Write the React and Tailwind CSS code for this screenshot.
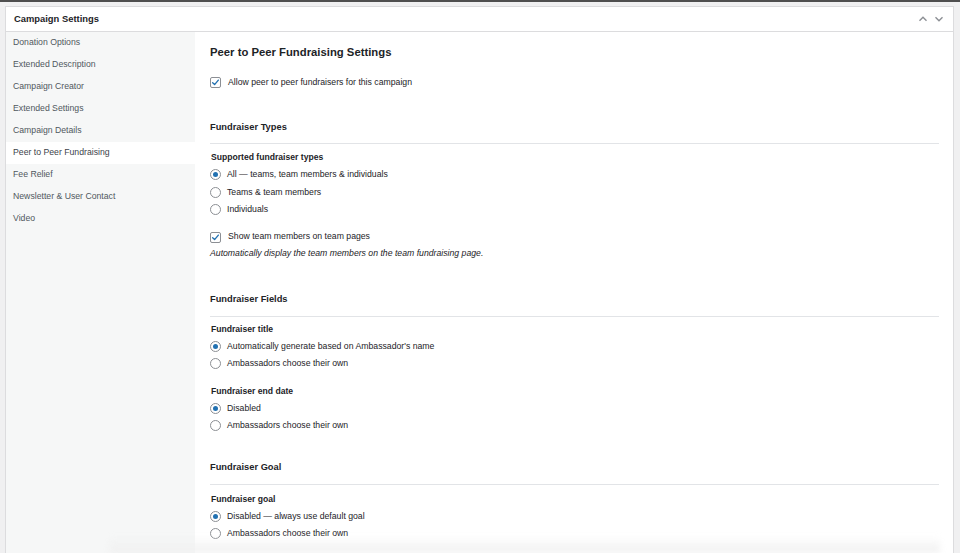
const tabs = [
  "Donation Options",
  "Extended Description",
  "Campaign Creator",
  "Extended Settings",
  "Campaign Details",
  "Peer to Peer Fundraising",
  "Fee Relief",
  "Newsletter & User Contact",
  "Video",
];

function Radio({ checked, children }) {
  return (
    <div className="flex items-center h-[17.5px]">
      <span className="w-[11px] h-[11px] rounded-full border border-[#8c8f94] bg-white flex items-center justify-center shrink-0">
        {checked && <span className="w-[5px] h-[5px] rounded-full bg-[#2271b1]" />}
      </span>
      <span className="ml-[6px] text-[8.7px] text-[#1d2327]">{children}</span>
    </div>
  );
}

function Checkbox({ children }) {
  return (
    <div className="flex items-center h-[17px]">
      <span className="w-[11px] h-[11px] rounded-[2px] border border-[#8c8f94] bg-white flex items-center justify-center shrink-0">
        <svg viewBox="0 0 12 12" className="w-[9px] h-[9px]">
          <path d="M2.2 6.4 L4.8 8.8 L9.8 2.8" fill="none" stroke="#2271b1" strokeWidth="1.8" strokeLinecap="round" strokeLinejoin="round" />
        </svg>
      </span>
      <span className="ml-[7px] text-[8.7px] text-[#1d2327]">{children}</span>
    </div>
  );
}

function SectionHeading({ children, className = "" }) {
  return (
    <div className={className}>
      <div className="h-[17px] flex items-center text-[9.3px] font-bold text-[#1d2327]">{children}</div>
      <div className="mt-[7px] border-t border-[#e2e4e7]" />
    </div>
  );
}

function Label({ children, className = "" }) {
  return (
    <div className={`h-[17px] flex items-center text-[8.6px] font-bold text-[#1d2327] pl-[1px] ${className}`}>
      {children}
    </div>
  );
}

export default function App() {
  return (
    <div className="relative w-[960px] h-[553px] overflow-hidden bg-[#f0f0f1] border-t-2 border-[#4f4f4f] font-['Liberation_Sans',Arial,sans-serif]">
      <div className="ml-[5px] mt-[4px] w-[949px] h-[600px] bg-white border border-[#dcdcde]">
        <div className="h-[25px] flex items-center justify-between px-[8px] border-b border-[#dcdcde]">
          <span className="text-[9.4px] font-bold text-[#1d2327]">Campaign Settings</span>
          <div className="flex items-center gap-[6px] text-[#8c8f94] pr-[1px]">
            <svg viewBox="0 0 10 10" className="w-[10px] h-[10px]">
              <path d="M1.5 6.8 L5 3.3 L8.5 6.8" fill="none" stroke="currentColor" strokeWidth="1.4" />
            </svg>
            <svg viewBox="0 0 10 10" className="w-[10px] h-[10px]">
              <path d="M1.5 3.3 L5 6.8 L8.5 3.3" fill="none" stroke="currentColor" strokeWidth="1.4" />
            </svg>
          </div>
        </div>
        <div className="flex h-full">
          <ul className="w-[189px] shrink-0 bg-[#f6f7f7]">
            {tabs.map((t) => (
              <li
                key={t}
                className={`h-[22px] flex items-center pl-[7px] text-[8.7px] ${
                  t === "Peer to Peer Fundraising" ? "bg-white text-[#3c434a]" : "text-[#50575e]"
                }`}
              >
                {t}
              </li>
            ))}
          </ul>
          <div className="flex-1 pl-[15px] pr-[14px] text-[#1d2327]">
            <div className="mt-[12px] h-[16px] flex items-center text-[11.3px] font-bold text-[#1d2327]">
              Peer to Peer Fundraising Settings
            </div>
            <div className="mt-[14px]">
              <Checkbox>Allow peer to peer fundraisers for this campaign</Checkbox>
            </div>

            <SectionHeading className="mt-[28px]">Fundraiser Types</SectionHeading>
            <Label className="mt-[5px]">Supported fundraiser types</Label>
            <Radio checked>All — teams, team members &amp; individuals</Radio>
            <Radio>Teams &amp; team members</Radio>
            <Radio>Individuals</Radio>
            <div className="mt-[10px]">
              <Checkbox>Show team members on team pages</Checkbox>
            </div>
            <div className="h-[17px] flex items-center text-[8.7px] italic text-[#1d2327]">
              Automatically display the team members on the team fundraising page.
            </div>

            <SectionHeading className="mt-[29px]">Fundraiser Fields</SectionHeading>
            <Label className="mt-[4px]">Fundraiser title</Label>
            <Radio checked>Automatically generate based on Ambassador's name</Radio>
            <Radio>Ambassadors choose their own</Radio>
            <Label className="mt-[10px]">Fundraiser end date</Label>
            <Radio checked>Disabled</Radio>
            <Radio>Ambassadors choose their own</Radio>

            <SectionHeading className="mt-[25px]">Fundraiser Goal</SectionHeading>
            <Label className="mt-[6px]">Fundraiser goal</Label>
            <Radio checked>Disabled — always use default goal</Radio>
            <Radio>Ambassadors choose their own</Radio>
          </div>
        </div>
      </div>
      <div className="absolute left-[110px] right-[20px] bottom-0 h-[16px] bg-gradient-to-b from-transparent to-[#efefef] blur-[3px] pointer-events-none" />
    </div>
  );
}
